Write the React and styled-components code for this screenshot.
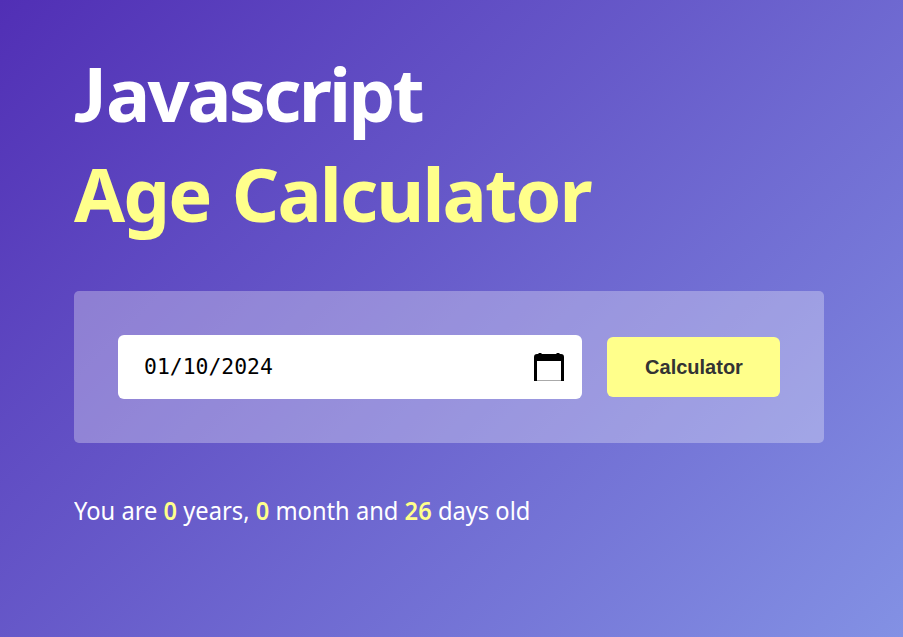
import React from 'react';
import styled, { createGlobalStyle } from 'styled-components';

const GlobalStyle = createGlobalStyle`
  * { box-sizing: border-box; margin: 0; padding: 0; }
`;
const Page = styled.main`
  height: 637px;
  padding: 44px 79px 0 74px;
  background: linear-gradient(135deg, #512fb5, #8391e4);
  color: #fff;
  font-family: "Noto Sans", "Open Sans", sans-serif;
`;
const Title = styled.h1`
  display: flex;
  flex-direction: column;
  align-items: flex-start;
  font-size: 74px;
  line-height: 100px;
  font-weight: 700;
`;
const Line = styled.span`
  height: 100px;
  color: ${(p) => p.$color};
  letter-spacing: ${(p) => p.$tracking}px;
  word-spacing: 4px;
  white-space: nowrap;
`;
const Initial = styled.span`
  font-family: Lato, sans-serif;
  font-weight: 900;
  line-height: 1;
  letter-spacing: 0;
`;
const Panel = styled.form`
  display: flex;
  align-items: center;
  gap: 25px;
  width: 750px;
  height: 152px;
  margin-top: 47px;
  padding: 0 44px;
  border-radius: 5px;
  background: rgba(255, 255, 255, 0.3);
`;
const DateField = styled.label`
  display: flex;
  align-items: center;
  justify-content: space-between;
  width: 464px;
  height: 64px;
  padding: 0 18px 0 26px;
  border-radius: 6px;
  background: #fff;
  color: #000;
  font: 21.4px/30px "DejaVu Sans Mono", monospace;
`;
const Button = styled.button`
  width: 173px;
  height: 60px;
  padding-left: 1px;
  border: 0;
  border-radius: 6px;
  background: #ffff8b;
  color: #333;
  font: 700 20px "Liberation Sans", sans-serif;
`;
const Result = styled.p`
  margin-top: 49px;
  font-size: 25px;
  line-height: 36px;
  white-space: nowrap;
  transform: scaleX(0.948);
  transform-origin: left;
`;
const Value = styled.strong`
  color: #ffff8b;
  font-weight: 600;
`;

export default function App() {
  return (
    <Page>
      <GlobalStyle />
      <Title>
        <Line $color="#fff" $tracking={-2.7}><Initial>J</Initial>avascript</Line>
        <Line $color="#ffff8b" $tracking={-1.9}>Age Calculator</Line>
      </Title>
      <Panel>
        <DateField>
          <span>01/10/2024</span>
          <svg width="30" height="30" viewBox="0 0 30 30">
            <path d="M3 2H4L5 1H7L8 2H22L23 1H25L26 2H27Q30 2 30 5V29H27V9H3V29H0V5Q0 2 3 2Z" />
            <path d="M3 28H27V29H3Z" fill="#aaa" />
          </svg>
        </DateField>
        <Button type="button">Calculator</Button>
      </Panel>
      <Result>
        You are <Value>0</Value> years, <Value>0</Value> month and <Value>26</Value> days old
      </Result>
    </Page>
  );
}
